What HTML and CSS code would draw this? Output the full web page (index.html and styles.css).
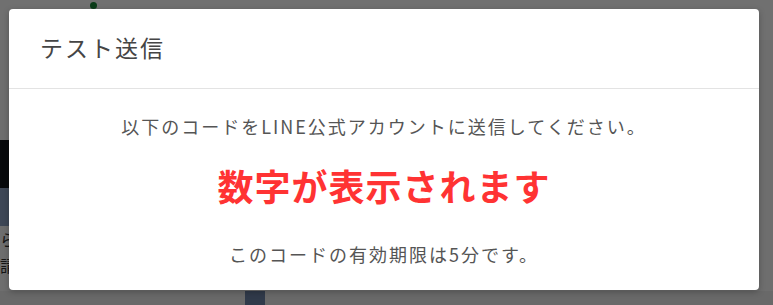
FILE: index.html
```html
<!DOCTYPE html>
<html lang="ja">

<head>
  <meta charset="UTF-8">
  <title>テスト送信</title>

  <link rel="stylesheet" href="styles.css">
</head>

<body>
  <!-- page behind the dialog -->
  <div class="app">
    <div class="app-top">
      <span class="app-dot"></span>
    </div>
    <div class="app-main">
      <div class="app-side">
        <div class="side-dark"></div>
        <div class="side-blue"></div>
        <div class="side-text">ら<br>請</div>
      </div>
      <div class="app-content"></div>
    </div>
    <div class="app-foot">
      <span class="foot-tab"></span>
    </div>
  </div>

  <div class="backdrop"></div>

  <div class="modal">
    <div class="modal-header">
      <h2>テスト送信</h2>
    </div>
    <div class="modal-body">
      <p class="lead">以下のコードをLINE公式アカウントに送信してください。</p>
      <p class="code">数字が表示されます</p>
      <p class="note">このコードの有効期限は5分です。</p>
    </div>
  </div>
</body>

</html>
```

FILE: styles.css
```css
html {
  font-family: "Noto Sans CJK JP", "Noto Sans", sans-serif;
}

body {
  margin: 0;
  width: 773px;
  height: 305px;
  overflow: hidden;
  position: relative;
  background: #fafafa;
}

.app {
  display: flex;
  flex-direction: column;
  height: 305px;
}

.app-top {
  height: 40px;
  background: #fff;
  position: relative;
}

.app-dot {
  position: absolute;
  left: 90px;
  top: 2px;
  width: 7px;
  height: 7px;
  border-radius: 50%;
  background: #1b8a3a;
}

.app-main {
  flex: 1;
  display: flex;
}

.app-side {
  width: 40px;
  display: flex;
  flex-direction: column;
  padding-top: 100px;
}

.side-dark {
  height: 48px;
  background: #12161c;
}

.side-blue {
  height: 38px;
  background: #8ea3c4;
}

.side-text {
  font-size: 16px;
  color: #333;
  line-height: 26px;
}

.app-content {
  flex: 1;
}

.app-foot {
  height: 14px;
  background: #f0f0f0;
  padding-left: 245px;
}

.foot-tab {
  display: block;
  width: 20px;
  height: 14px;
  background: #6f85a8;
}

.backdrop {
  position: absolute;
  inset: 0;
  background: rgba(0, 0, 0, 0.56);
}

.modal {
  position: absolute;
  left: 9px;
  top: 9px;
  width: 750px;
  height: 281px;
  background: #fff;
  border-radius: 4px;
  box-shadow: 0 2px 6px rgba(0, 0, 0, 0.25);
}

.modal-header {
  height: 80px;
  border-bottom: 1px solid #e3e3e3;
  display: flex;
  align-items: center;
  padding-left: 31px;
  padding-bottom: 4px;
  box-sizing: border-box;
}

.modal-header h2 {
  margin: 0;
  font-size: 23px;
  font-weight: 400;
  letter-spacing: 2px;
  color: #454545;
}

.modal-body {
  text-align: center;
  padding-top: 24px;
}

.lead,
.note {
  margin: 0;
  font-size: 18px;
  letter-spacing: 2px;
  color: #555;
}

.code {
  margin: 20px 0 30px;
  font-size: 36px;
  font-weight: 700;
  letter-spacing: 1px;
  color: #ff3333;
}
```
